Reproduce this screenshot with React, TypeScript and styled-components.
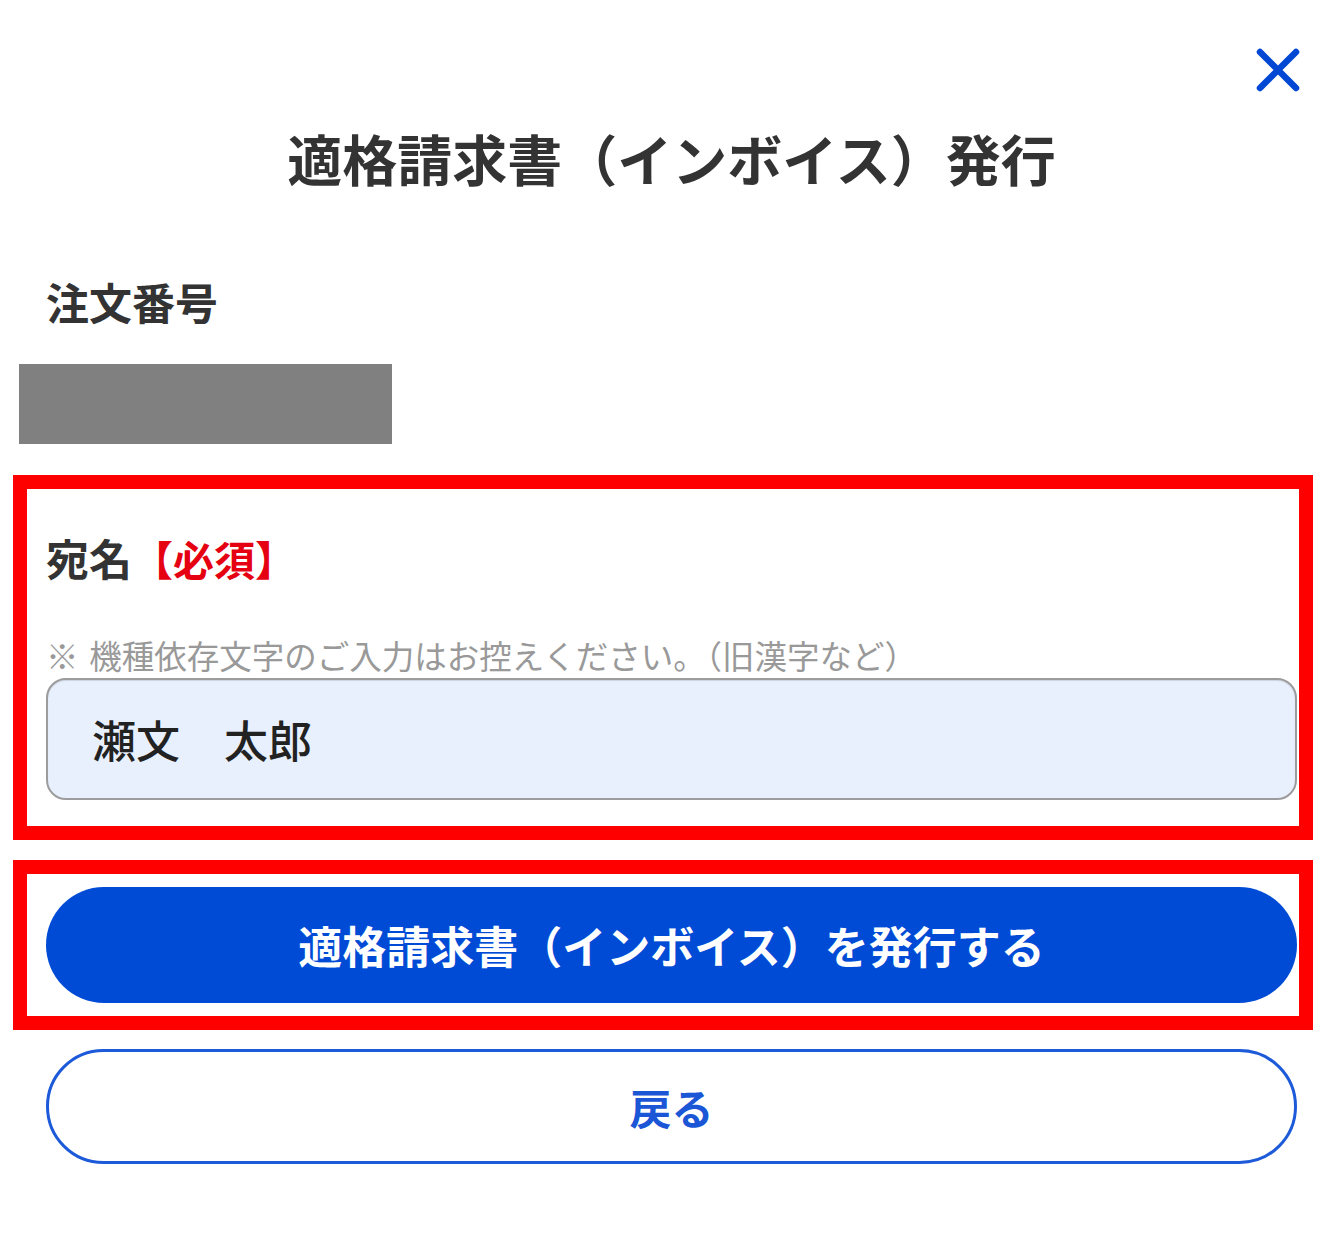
import React from 'react';
import styled, { createGlobalStyle } from 'styled-components';

const GlobalStyle = createGlobalStyle`
  html, body {
    margin: 0;
    padding: 0;
    background: #fff;
  }
  body {
    font-family: 'Noto Sans CJK JP', 'Noto Sans', sans-serif;
    color: #333;
  }
  * {
    box-sizing: border-box;
  }
`;

const Page = styled.div`
  width: 1337px;
  min-height: 1241px;
  background: #fff;
  overflow: hidden;
`;

const Column = styled.div`
  width: 1251px;
  margin-left: 46px;
  display: flex;
  flex-direction: column;
`;

const CloseRow = styled.div`
  display: flex;
  justify-content: flex-end;
  padding-top: 40px;
`;

const CloseButton = styled.button`
  width: 60px;
  height: 60px;
  margin-right: -11px;
  display: flex;
  align-items: center;
  justify-content: center;
  padding: 0;
  border: none;
  background: transparent;
  cursor: pointer;
`;

const Title = styled.h1`
  margin: 22px 0 0;
  height: 70px;
  line-height: 70px;
  font-size: 55px;
  font-weight: 700;
  color: #333;
  text-align: center;
`;

const FieldLabel = styled.div<{ $mt: number }>`
  margin-top: ${({ $mt }) => $mt}px;
  height: 50px;
  line-height: 50px;
  font-size: 43px;
  font-weight: 700;
  color: #333;
  white-space: nowrap;
`;

const Required = styled.span`
  color: #e50012;
  font-size: 41px;
`;

const Redacted = styled.div`
  margin: 38px 0 0 -27px;
  width: 373px;
  height: 80px;
  background: #808080;
`;

const Highlight = styled.section<{ $mt: number; $pt: number; $pb: number }>`
  margin: ${({ $mt }) => $mt}px -16px 0 -33px;
  padding: ${({ $pt }) => $pt}px 2px ${({ $pb }) => $pb}px 19px;
  border: 14px solid #ff0000;
  display: flex;
  flex-direction: column;
`;

const Hint = styled.p`
  margin: 53px 0 0;
  height: 40px;
  line-height: 40px;
  font-size: 32.5px;
  color: #999;
  white-space: nowrap;
`;

const NameInput = styled.input`
  margin-top: 3px;
  width: 100%;
  height: 122px;
  padding: 0 0 0 44px;
  border: 2px solid #9c9c9c;
  border-radius: 20px;
  background: #e8f0fe;
  box-shadow: inset 0 1px 1px rgba(0, 0, 0, 0.12);
  font-family: inherit;
  font-size: 44px;
  font-weight: 500;
  color: #222;
  outline: none;
`;

const PillButton = styled.button<{ $variant: 'primary' | 'secondary' }>`
  width: 100%;
  height: ${({ $variant }) => ($variant === 'primary' ? 116 : 115)}px;
  border-radius: 60px;
  border: ${({ $variant }) =>
    $variant === 'primary' ? 'none' : '3px solid #1c5ad9'};
  background: ${({ $variant }) => ($variant === 'primary' ? '#004bd6' : '#fff')};
  color: ${({ $variant }) => ($variant === 'primary' ? '#fff' : '#1a56d6')};
  font-family: inherit;
  font-size: ${({ $variant }) => ($variant === 'primary' ? 44 : 42)}px;
  font-weight: 700;
  cursor: pointer;
  padding: 0;
`;

const BackWrap = styled.div`
  margin-top: 19px;
`;

const CloseIcon = () => (
  <svg width='44' height='44' viewBox='0 0 44 44'>
    <path
      d='M4 4 L40 40 M40 4 L4 40'
      stroke='#0047d4'
      strokeWidth='6.5'
      strokeLinecap='round'
      fill='none'
    />
  </svg>
);

export default function App(): JSX.Element {
  return (
    <Page>
      <GlobalStyle />
      <Column>
        <CloseRow>
          <CloseButton aria-label='閉じる'>
            <CloseIcon />
          </CloseButton>
        </CloseRow>
        <Title>適格請求書（インボイス）発行</Title>
        <FieldLabel $mt={84}>注文番号</FieldLabel>
        <Redacted />
        <Highlight $mt={31} $pt={43} $pb={26}>
          <FieldLabel $mt={0}>
            宛名<Required>【必須】</Required>
          </FieldLabel>
          <Hint>※&#8196;機種依存文字のご入力はお控えください。（旧漢字など）</Hint>
          <NameInput defaultValue='瀬文　太郎' />
        </Highlight>
        <Highlight $mt={20} $pt={13} $pb={13}>
          <PillButton $variant='primary'>
            適格請求書（インボイス）を発行する
          </PillButton>
        </Highlight>
        <BackWrap>
          <PillButton $variant='secondary'>戻る</PillButton>
        </BackWrap>
      </Column>
    </Page>
  );
}
